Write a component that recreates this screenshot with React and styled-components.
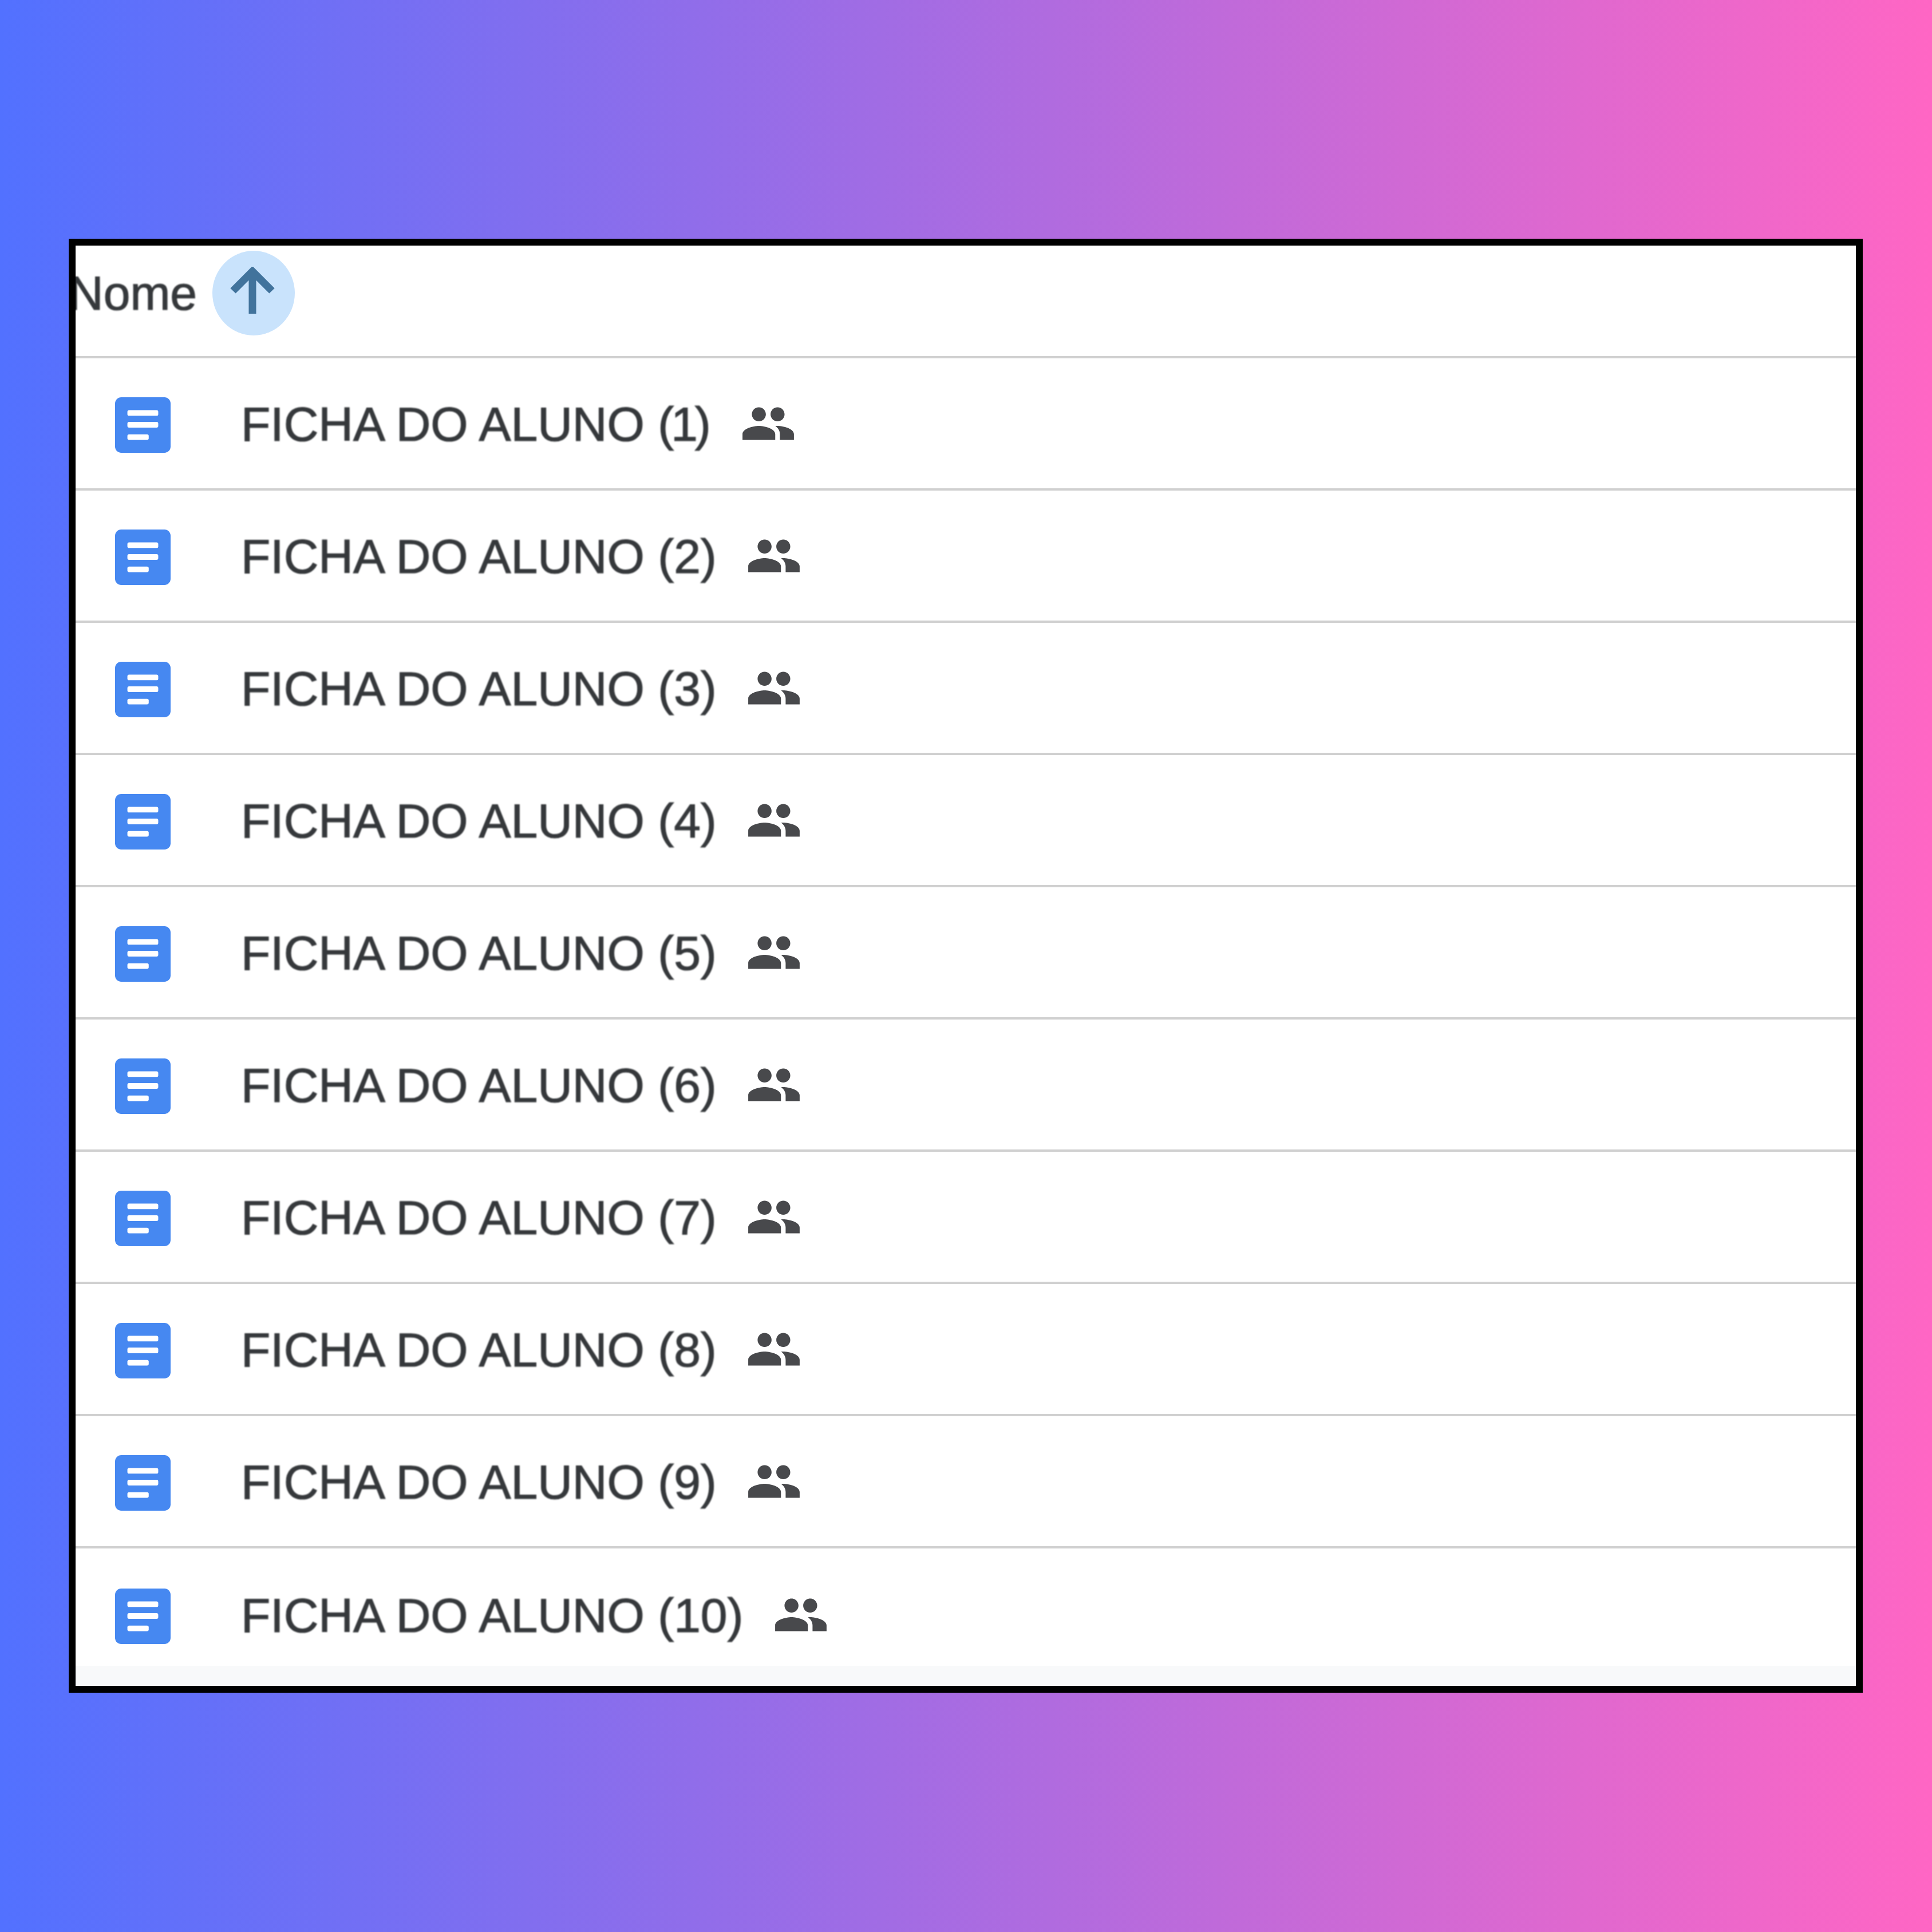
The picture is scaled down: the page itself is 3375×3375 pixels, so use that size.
import React from 'react';
import styled, { createGlobalStyle } from 'styled-components';

const files = [1, 2, 3, 4, 5, 6, 7, 8, 9, 10];

const Global = createGlobalStyle`
    html, body {
        margin: 0;
        padding: 0;
    }
`;

const App = () => {
    return (
        <Page>
            <Global />
            <Frame>
                <HeaderRow>
                    <HeaderLabel>Nome</HeaderLabel>
                    <SortButton>
                        <svg width="88" height="92" viewBox="0 0 88 92" fill="none">
                            <path d="M42 82V8M8 42L42 8L76 42" stroke="#41739c" strokeWidth="13" />
                        </svg>
                    </SortButton>
                </HeaderRow>
                {files.map((n) => (
                    <FileRow key={n}>
                        <DocIcon viewBox="0 0 99 99">
                            <rect width="99" height="99" rx="11" fill="#4688f1" />
                            <rect x="22" y="23" width="55" height="10" rx="3" fill="#fff" />
                            <rect x="22" y="44" width="55" height="10" rx="3" fill="#fff" />
                            <rect x="22" y="66" width="38" height="10" rx="3" fill="#fff" />
                        </DocIcon>
                        {/* the lone 1 kerns tighter against its brackets */}
                        <FileName>FICHA DO ALUNO (<Digit $tight={n === 1}>{n}</Digit>)</FileName>
                        <SharedIcon viewBox="0 0 24 24">
                            <path d="M16 11c1.66 0 2.99-1.34 2.99-3S17.66 5 16 5c-1.66 0-3 1.34-3 3s1.34 3 3 3zm-8 0c1.66 0 2.99-1.34 2.99-3S9.66 5 8 5C6.34 5 5 6.34 5 8s1.34 3 3 3zm0 2c-2.33 0-7 1.17-7 3.5V19h14v-2.5c0-2.33-4.67-3.5-7-3.5zm8 0c-.29 0-.62.02-.97.05 1.16.84 1.97 1.97 1.97 3.45V19h6v-2.5c0-2.33-4.67-3.5-7-3.5z" />
                        </SharedIcon>
                    </FileRow>
                ))}
                <BottomFade />
            </Frame>
        </Page>
    );
};

export default App;

const Page = styled.div`
    width: 3375px;
    height: 3375px;
    padding: 417px 0 0 120px;
    box-sizing: border-box;
    background: linear-gradient(90deg, #5271ff, #ff66c4);
`;

const Frame = styled.div`
    position: relative;
    width: 3134px;
    height: 2540px;
    box-sizing: border-box;
    border: 12px solid #000;
    background: #fff;
    overflow: hidden;
    font-family: "Liberation Sans", Arial, sans-serif;
`;

const HeaderRow = styled.div`
    display: flex;
    align-items: center;
    gap: 27px;
    height: 197px;
    box-sizing: border-box;
    padding-bottom: 27px;
    border-bottom: 4px solid #d0d0d0;
`;

const HeaderLabel = styled.span`
    margin-left: -12px;
    font-size: 84px;
    color: #35383b;
    -webkit-text-stroke: 1.2px #35383b;
    filter: blur(0.9px);
`;

const SortButton = styled.div`
    display: flex;
    align-items: center;
    justify-content: center;
    width: 144px;
    height: 148px;
    border-radius: 50%;
    background: #c9e3fc;
    filter: blur(0.6px);
`;

const FileRow = styled.div`
    display: flex;
    align-items: center;
    height: 231px;
    box-sizing: border-box;
    padding-left: 69px;
    border-bottom: 4px solid #d0d0d0;

    &:nth-last-of-type(2) {
        border-bottom: none;
    }
`;

const DocIcon = styled.svg`
    width: 97px;
    height: 97px;
    flex: none;
    margin-top: 6px;
    filter: blur(0.7px);
`;

const FileName = styled.span`
    margin: 3px 0 0 123px;
    font-size: 84px;
    color: #35383b;
    -webkit-text-stroke: 1.2px #35383b;
    filter: blur(0.9px);
`;

const Digit = styled.span`
    margin-left: ${(p) => (p.$tight ? '-5px' : '0')};
    letter-spacing: ${(p) => (p.$tight ? '-5px' : '0')};
`;

const SharedIcon = styled.svg`
    width: 98px;
    height: 98px;
    margin-left: 51px;
    fill: #48494c;
    filter: blur(0.7px);
`;

const BottomFade = styled.div`
    position: absolute;
    left: 0;
    right: 0;
    bottom: 0;
    height: 35px;
    background: #f8f9fa;
`;
